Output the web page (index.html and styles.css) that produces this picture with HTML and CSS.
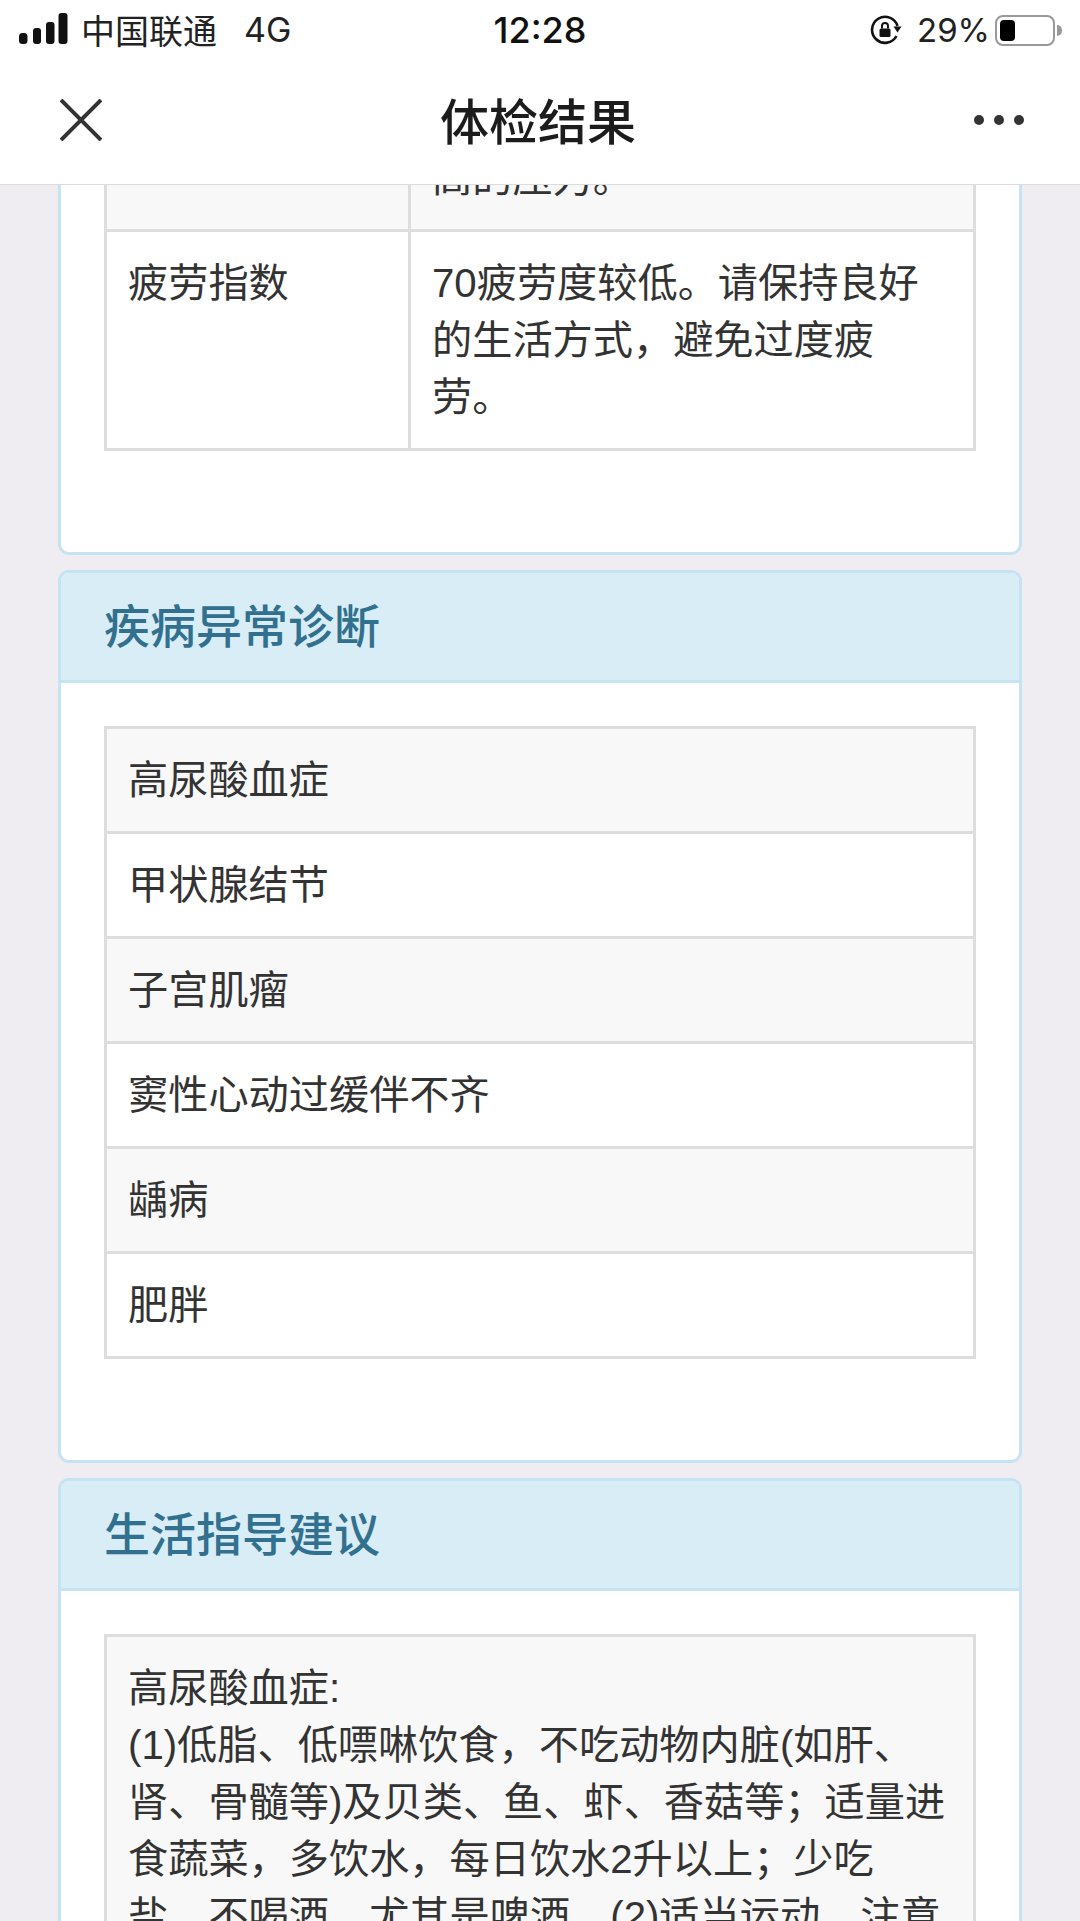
FILE: index.html
```html
<!DOCTYPE html>
<html>
<head>
    <meta name="viewport" content="width=device-width, initial-scale=1.0">
    <title>体检结果</title>
    <link rel="stylesheet" href="styles.css">
</head>
<body>
    <div class="topbar">
        <div class="statusbar">
            <div class="status-left">
                <svg class="signal" width="50" height="32" viewBox="0 0 50 32">
                    <rect x="0" y="20" width="8.5" height="11" rx="3.5"/>
                    <rect x="14" y="15" width="8" height="16" rx="3"/>
                    <rect x="27" y="9" width="8.5" height="22" rx="3"/>
                    <rect x="39.5" y="0" width="9" height="31" rx="3"/>
                </svg>
                <span class="carrier">中国联通</span>
                <span class="network">4G</span>
            </div>
            <div class="time">12:28</div>
            <div class="status-right">
                <svg class="lock" width="32" height="30" viewBox="0 0 32 30">
                    <path d="M26.5 21A13 13 0 1 1 27.5 11" fill="none" stroke="#111" stroke-width="2.6"/>
                    <path d="M23.5 11.5h8l-4 6z" fill="#111"/>
                    <rect x="9.5" y="13.5" width="11" height="8.5" rx="1.5" fill="#111"/>
                    <path d="M12 13.5V11a3 3 0 0 1 6 0v2.5" fill="none" stroke="#111" stroke-width="2"/>
                </svg>
                <span class="battery-text">29%</span>
                <div class="battery"><div class="battery-fill"></div></div>
                <div class="battery-nub"></div>
            </div>
        </div>
        <div class="navbar">
            <svg class="close" width="42" height="42" viewBox="0 0 42 42">
                <path d="M1 1l40 40M41 1L1 41" stroke="#333" stroke-width="4" fill="none"/>
            </svg>
            <div class="title">体检结果</div>
            <div class="dots"><span></span><span></span><span></span></div>
        </div>
    </div>

    <div class="content">
        <div class="scroller">
            <div class="panel">
                <div class="panel-body">
                    <table class="grid">
                        <tr class="odd">
                            <td class="label"></td>
                            <td>高的压力。</td>
                        </tr>
                        <tr>
                            <td class="label">疲劳指数</td>
                            <td>70疲劳度较低。请保持良好的生活方式，避免过度疲劳。</td>
                        </tr>
                    </table>
                </div>
            </div>

            <div class="panel">
                <div class="panel-heading">疾病异常诊断</div>
                <div class="panel-body">
                    <table class="grid">
                        <tr class="odd"><td>高尿酸血症</td></tr>
                        <tr><td>甲状腺结节</td></tr>
                        <tr class="odd"><td>子宫肌瘤</td></tr>
                        <tr><td>窦性心动过缓伴不齐</td></tr>
                        <tr class="odd"><td>龋病</td></tr>
                        <tr><td>肥胖</td></tr>
                    </table>
                </div>
            </div>

            <div class="panel">
                <div class="panel-heading">生活指导建议</div>
                <div class="panel-body">
                    <table class="grid">
                        <tr class="odd">
                            <td>高尿酸血症:<br>(1)低脂、低嘌啉饮食，不吃动物内脏(如肝、肾、骨髓等)及贝类、鱼、虾、香菇等；适量进食蔬菜，多饮水，每日饮水2升以上；少吃盐，不喝酒，尤其是啤酒。(2)适当运动，注意</td>
                        </tr>
                    </table>
                </div>
            </div>
        </div>
    </div>
</body>
</html>
```

FILE: styles.css
```css
* {
    box-sizing: border-box;
}
html, body {
    margin: 0;
    padding: 0;
    height: 100%;
}
body {
    height: 1921px;
    display: flex;
    flex-direction: column;
    overflow: hidden;
    background-color: #efedf1;
    color: #333;
    font-family: "Liberation Sans", "Noto Sans CJK SC", sans-serif;
    font-size: 40.2px;
    line-height: 57px;
}

/* top of the phone */
.topbar {
    height: 185px;
    flex: none;
    background-color: #fff;
    border-bottom: 1px solid #dcdcdc;
}
.statusbar {
    height: 60px;
    display: grid;
    grid-template-columns: 1fr auto 1fr;
    align-items: center;
    color: #222;
    font-family: "Noto Sans CJK SC", sans-serif;
    font-size: 34px;
    line-height: 40px;
}
.status-left {
    display: flex;
    align-items: center;
    padding-left: 19px;
}
.signal {
    fill: #111;
    margin-right: 12px;
    margin-top: -3px;
}
.network {
    font-family: "Inter", sans-serif;
    font-size: 34px;
    margin-left: 27px;
}
.time {
    font-family: "Inter", sans-serif;
    font-size: 36px;
    font-weight: 500;
    color: #111;
}
.status-right {
    display: flex;
    align-items: center;
    justify-content: flex-end;
    padding-right: 18px;
}
.battery-text {
    font-family: "Inter", sans-serif;
    font-size: 33px;
    margin-left: 15px;
    margin-right: 5px;
}
.battery {
    width: 60px;
    height: 31px;
    border: 2px solid #999;
    border-radius: 8px;
    padding: 3px;
}
.battery-fill {
    width: 15px;
    height: 100%;
    background-color: #000;
    border-radius: 4px;
}
.battery-nub {
    width: 5px;
    height: 11px;
    margin-left: 2px;
    background-color: #999;
    border-radius: 0 5px 5px 0;
}
.navbar {
    height: 124px;
    display: grid;
    grid-template-columns: 1fr auto 1fr;
    align-items: center;
    padding: 0 56px;
}
.close {
    margin-top: -5px;
    margin-left: 4px;
}
.title {
    font-family: "Noto Sans CJK SC", sans-serif;
    font-size: 49px;
    font-weight: 500;
    color: #1c1c1c;
    margin-top: -7px;
    margin-right: 4px;
}
.dots {
    display: flex;
    justify-content: flex-end;
    gap: 10px;
    margin-top: -5px;
}
.dots span {
    width: 10px;
    height: 10px;
    border-radius: 50%;
    background-color: #333;
}

/* page, scrolled part way down */
.content {
    flex: 1;
    overflow: hidden;
    padding: 0 58px;
}
.scroller {
    margin-top: -107px;
}
.panel {
    background-color: #fff;
    border: 3px solid #c5e3f3;
    border-radius: 11px;
    margin-bottom: 15px;
    overflow: hidden;
}
.panel-heading {
    height: 110px;
    padding: 0 43px;
    background-color: #d9edf7;
    border-bottom: 3px solid #c5e5f1;
    color: #31708f;
    font-family: "Noto Sans CJK SC", sans-serif;
    font-size: 46px;
    font-weight: 500;
    line-height: 100px;
}
.panel-body {
    padding: 43px 43px 101px;
}
.grid {
    width: 100%;
    border-collapse: collapse;
    table-layout: fixed;
}
.grid td {
    border: 3px solid #ddd;
    padding: 23px 23px 22px 21px;
    vertical-align: top;
}
.grid .label {
    width: 304px;
}
.grid .odd td {
    background-color: #f8f8f8;
}
```
